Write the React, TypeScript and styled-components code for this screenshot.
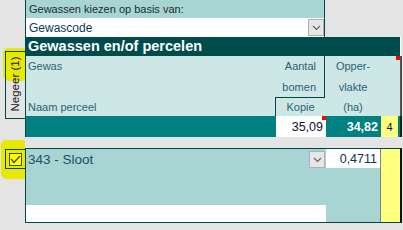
import React from "react";
import styled, { createGlobalStyle } from "styled-components";

const Global = createGlobalStyle`
  html, body { margin: 0; padding: 0; background: #e4e4e4; }
  * { box-sizing: border-box; }
`;

const dark = "#004848";

const Page = styled.div`
  width: 403px;
  height: 230px;
  background: #e4e4e4;
  display: flex;
  overflow: hidden;
  font-family: "Liberation Sans", Arial, sans-serif;
`;

// left gutter with the highlighted controls
const Gutter = styled.div`
  position: relative;
  z-index: 0;
  width: 25px;
  flex: none;
  display: flex;
  flex-direction: column;
  align-items: flex-end;
`;

const Marked = styled.div<{ $top: number; $h: number; $left: number }>`
  position: relative;
  &::before {
    content: "";
    position: absolute;
    z-index: -1;
    left: ${({ $left }) => $left}px;
    top: ${({ $top }) => $top}px;
    width: calc(100% - ${({ $left }) => $left}px);
    height: ${({ $h }) => $h}px;
    background: #e8e800;
    border-radius: 5px 2px 2px 6px;
  }
`;

const NegeerBox = styled(Marked)`
  margin-top: 51px;
  width: 20px;
  height: 68px;
  border: 1px solid ${dark};
  border-right: none;
  display: flex;
  align-items: center;
  justify-content: center;
`;

const Vertical = styled.span`
  display: block;
  transform: rotate(-90deg);
  white-space: nowrap;
  font-size: 11.5px;
  color: #14202a;
  margin-bottom: 2px;
`;

const CheckCell = styled(Marked)`
  margin-top: 30px;
  width: 20px;
  height: 20px;
  border: 1px solid ${dark};
  border-right: none;
  display: flex;
  align-items: center;
  justify-content: center;
`;

const CheckBox = styled.div`
  width: 13px;
  height: 13px;
  background: #ffff00;
  border: 1px solid #3c4a2a;
  display: flex;
  align-items: center;
  justify-content: center;
`;

const Main = styled.div`
  width: 378px;
  flex: none;
  display: flex;
  flex-direction: column;
`;

const Chooser = styled.div`
  width: 300px;
  height: 37px;
  border-left: 1px solid ${dark};
  border-right: 1px solid ${dark};
  display: grid;
  grid-template-rows: 18px 19px;
`;

const ChooserLabel = styled.div`
  background: #a8d4d4;
  font-size: 11px;
  color: #16302e;
  padding: 3px 0 0 3px;
`;

const SelectRow = styled.div`
  background: #fff;
  display: flex;
  align-items: center;
  justify-content: space-between;
  font-size: 12px;
  color: #0e3a56;
  padding-left: 3px;
`;

const DropButton = styled.div`
  width: 16px;
  height: 17px;
  background: #e6e6e6;
  border: 1px solid #b0b0b0;
  display: flex;
  align-items: center;
  justify-content: center;
`;

const TitleBar = styled.div`
  width: 376px;
  height: 19px;
  background: #004c4c;
  border-right: 1px solid #fff;
  color: #fff;
  font-weight: bold;
  font-size: 14.5px;
  line-height: 19px;
  padding-left: 3px;
  white-space: nowrap;
`;

const Header = styled.div`
  width: 377px;
  height: 60px;
  background: #cde6e6;
  border-left: 1px solid ${dark};
  border-right: 2px solid #505050;
  display: grid;
  grid-template-columns: 249px 50px 56px 19px;
  grid-template-rows: 20px 21px 19px;
  font-size: 11px;
  color: #2a6274;
`;

const HeadCell = styled.div<{ $col: number; $row: number; $align?: string; $boxed?: "side" | "corner" }>`
  grid-column: ${({ $col }) => $col};
  grid-row: ${({ $row }) => $row};
  display: flex;
  align-items: center;
  justify-content: ${({ $align }) => $align || "center"};
  padding: 0 ${({ $align }) => ($align === "flex-end" ? "8px" : "0")} 0 ${({ $align }) => ($align === "flex-start" ? "2px" : "0")};
  border-right: ${({ $boxed }) => ($boxed === "side" ? `1px solid ${dark}` : "none")};
  border-top: ${({ $boxed }) => ($boxed === "corner" ? `1px solid ${dark}` : "none")};
  border-left: ${({ $boxed }) => ($boxed === "corner" ? `1px solid ${dark}` : "none")};
  position: relative;
`;

const Note = styled.span`
  position: absolute;
  top: 0;
  right: 0;
  width: 4px;
  height: 4px;
  background: #ff0000;
`;

const Totals = styled.div`
  width: 377px;
  height: 21px;
  background: #008080;
  border-left: 1px solid ${dark};
  border-right: 2px solid #202020;
  display: grid;
  grid-template-columns: 250px 50px 55px 17px;
  font-size: 12.5px;
`;

const Cell = styled.div<{ $bg?: string; $color?: string; $bold?: boolean; $center?: boolean }>`
  position: relative;
  background: ${({ $bg }) => $bg || "transparent"};
  color: ${({ $color }) => $color || "#101030"};
  font-weight: ${({ $bold }) => ($bold ? "bold" : "normal")};
  display: flex;
  align-items: center;
  justify-content: ${({ $center }) => ($center ? "center" : "flex-end")};
  padding-right: ${({ $center }) => ($center ? "0" : "3px")};
`;

const Small = styled.span`
  font-size: 11px;
`;

const Lower = styled.div`
  margin-top: 11px;
  width: 377px;
  height: 75px;
  background: #a8d4d4;
  border: 1px solid ${dark};
  border-right: 2px solid #101010;
  display: grid;
  grid-template-columns: 283px 17px 54px 20px;
  grid-template-rows: 19px 1fr 17px;
`;

const CropName = styled.div`
  grid-column: 1;
  grid-row: 1;
  font-size: 13.5px;
  color: #1d4f62;
  padding: 3px 0 0 2px;
`;

const LowerDrop = styled(DropButton)`
  grid-column: 2;
  grid-row: 1;
  align-self: center;
  margin-top: 2px;
`;

const Value = styled.div`
  grid-column: 3;
  grid-row: 1;
  background: #fff;
  font-size: 12.5px;
  color: #10304e;
  display: flex;
  align-items: center;
  justify-content: flex-end;
  padding-right: 3px;
`;

const YellowCol = styled.div`
  grid-column: 4;
  grid-row: 1 / 4;
  background: #ffff80;
  border-left: 1px solid #808080;
`;

const WhiteStrip = styled.div`
  grid-column: 1 / 3;
  grid-row: 3;
  background: #fff;
`;

const Chevron = () => (
  <svg width="9" height="6" viewBox="0 0 9 6">
    <polyline points="1,1 4.5,4.5 8,1" fill="none" stroke="#606060" strokeWidth="1.1" />
  </svg>
);

const Tick = () => (
  <svg width="11" height="9" viewBox="0 0 11 9">
    <polyline points="1,4 4,7.5 10,1" fill="none" stroke="#4a4a20" strokeWidth="1.3" />
  </svg>
);

export default function App() {
  return (
    <>
      <Global />
      <Page>
        <Gutter>
          <NegeerBox $top={-4} $h={33} $left={-3}>
            <Vertical>Negeer (1)</Vertical>
          </NegeerBox>
          <CheckCell $top={-10} $h={39} $left={-5}>
            <CheckBox>
              <Tick />
            </CheckBox>
          </CheckCell>
        </Gutter>
        <Main>
          <Chooser>
            <ChooserLabel>Gewassen kiezen op basis van:</ChooserLabel>
            <SelectRow>
              Gewascode
              <DropButton>
                <Chevron />
              </DropButton>
            </SelectRow>
          </Chooser>
          <TitleBar>Gewassen en/of percelen</TitleBar>
          <Header>
            <HeadCell $col={1} $row={1} $align="flex-start">Gewas</HeadCell>
            <HeadCell $col={1} $row={3} $align="flex-start">Naam perceel</HeadCell>
            <HeadCell $col={2} $row={1} $align="flex-end" $boxed="side">Aantal</HeadCell>
            <HeadCell $col={2} $row={2} $align="flex-end" $boxed="side">bomen</HeadCell>
            <HeadCell $col={2} $row={3} $boxed="corner">Kopie</HeadCell>
            <HeadCell $col={3} $row={1}>Opper-</HeadCell>
            <HeadCell $col={3} $row={2}>vlakte</HeadCell>
            <HeadCell $col={3} $row={3}>(ha)</HeadCell>
            <HeadCell $col={4} $row={1}>
              <Note />
            </HeadCell>
          </Header>
          <Totals>
            <Cell />
            <Cell $bg="#fff">
              35,09
              <Note />
            </Cell>
            <Cell $color="#fff" $bold>34,82</Cell>
            <Cell $bg="#ffff80" $center>
              <Small>4</Small>
            </Cell>
          </Totals>
          <Lower>
            <CropName>343 - Sloot</CropName>
            <LowerDrop>
              <Chevron />
            </LowerDrop>
            <Value>0,4711</Value>
            <YellowCol />
            <WhiteStrip />
          </Lower>
        </Main>
      </Page>
    </>
  );
}
